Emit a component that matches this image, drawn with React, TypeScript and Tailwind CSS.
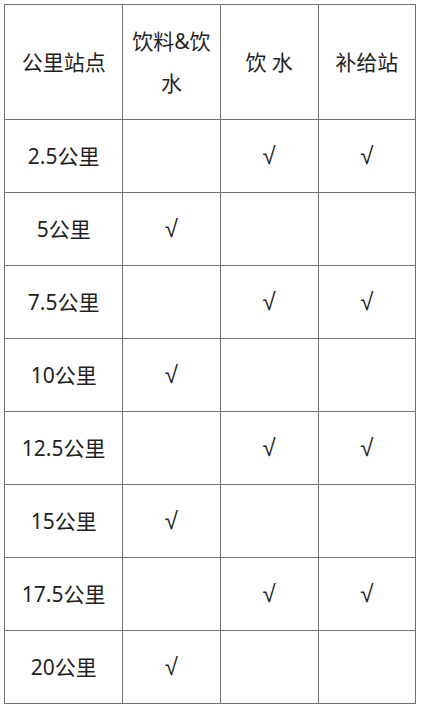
const rows: { km: string; drink: boolean; water: boolean; supply: boolean }[] = [
  { km: "2.5公里", drink: false, water: true, supply: true },
  { km: "5公里", drink: true, water: false, supply: false },
  { km: "7.5公里", drink: false, water: true, supply: true },
  { km: "10公里", drink: true, water: false, supply: false },
  { km: "12.5公里", drink: false, water: true, supply: true },
  { km: "15公里", drink: true, water: false, supply: false },
  { km: "17.5公里", drink: false, water: true, supply: true },
  { km: "20公里", drink: true, water: false, supply: false },
];

const cell = "border border-[#6f6f6f] px-[5px] text-center align-middle";

function Check({ on }: { on: boolean }) {
  if (!on) return null;
  return (
    <span className="text-[24px]" style={{ fontFamily: '"Liberation Sans", sans-serif' }}>
      √
    </span>
  );
}

export default function App() {
  return (
    <div
      className="min-h-[709px] bg-white pl-[4px] pt-[4px] text-[21px] leading-[42px] text-[#1f1f1f]"
      style={{ fontFamily: '"Noto Sans", "Noto Sans CJK SC", sans-serif' }}
    >
      <table className="w-[412px] table-fixed border-collapse">
        <colgroup>
          <col className="w-[118px]" />
          <col className="w-[97px]" />
          <col className="w-[98px]" />
          <col className="w-[97px]" />
        </colgroup>
        <thead>
          <tr className="h-[115px]">
            <th className={`${cell} font-normal`}>公里站点</th>
            <th className={`${cell} font-normal`}>饮料&amp;饮水</th>
            <th className={`${cell} font-normal`}>饮 水</th>
            <th className={`${cell} font-normal`}>补给站</th>
          </tr>
        </thead>
        <tbody>
          {rows.map((r) => (
            <tr key={r.km} className="h-[73px]">
              <td className={cell}>{r.km}</td>
              <td className={cell}>
                <Check on={r.drink} />
              </td>
              <td className={cell}>
                <Check on={r.water} />
              </td>
              <td className={cell}>
                <Check on={r.supply} />
              </td>
            </tr>
          ))}
        </tbody>
      </table>
    </div>
  );
}
